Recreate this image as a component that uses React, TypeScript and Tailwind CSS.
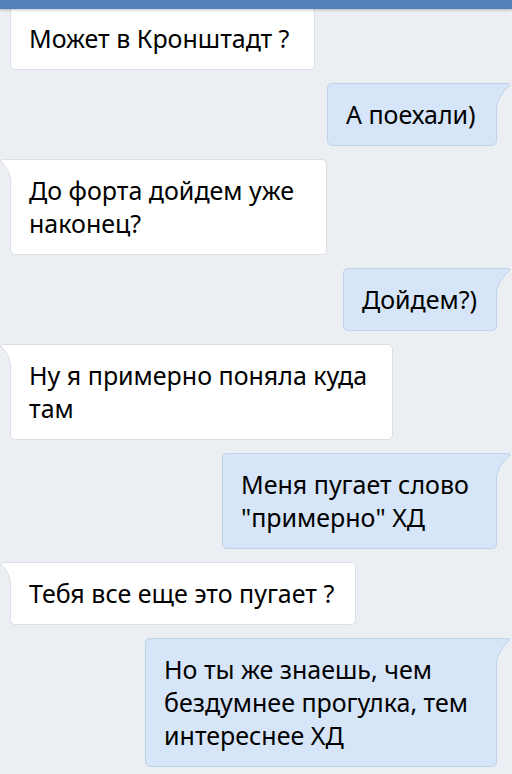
import React from 'react';

type Msg = {
  side: 'in' | 'out';
  lines: string[];
  width: string;
  tail?: boolean;
};

const messages: Msg[] = [
  { side: 'in', lines: ['Может в Кронштадт ?'], width: 'w-[305px]', tail: false },
  { side: 'out', lines: ['А поехали)'], width: 'w-[170px]' },
  { side: 'in', lines: ['До форта дойдем уже', 'наконец?'], width: 'w-[317px]' },
  { side: 'out', lines: ['Дойдем?)'], width: 'w-[154px]' },
  { side: 'in', lines: ['Ну я примерно поняла куда', 'там'], width: 'w-[383px]' },
  { side: 'out', lines: ['Меня пугает слово', '"примерно" ХД'], width: 'w-[275px]' },
  { side: 'in', lines: ['Тебя все еще это пугает ?'], width: 'w-[346px]' },
  { side: 'out', lines: ['Но ты же знаешь, чем', 'бездумнее прогулка, тем', 'интереснее ХД'], width: 'w-[352px]' },
];

function TailIn() {
  return (
    <svg className="absolute -left-[11px] -top-px" width="12" height="24" viewBox="0 0 12 24">
      <path d="M12 0 H3 Q0 0 1.5 2.5 Q10 10 11 24 H12 Z" fill="#ffffff" />
      <path d="M12 0.5 H3 Q0 0.5 1.5 3 Q10 10.5 11 24" fill="none" stroke="#dbdfe5" strokeWidth="1" />
    </svg>
  );
}

function TailOut() {
  return (
    <svg className="absolute -right-[15px] -top-px" width="16" height="26" viewBox="0 0 16 26">
      <path d="M0 0 H13 Q16 0 14.5 2.5 Q3 12 1 26 H0 Z" fill="#d6e5f7" />
      <path d="M0 0.5 H13 Q15.5 0.5 14 3 Q3 12.5 1 26" fill="none" stroke="#bfd2e8" strokeWidth="1" />
    </svg>
  );
}

function Bubble({ msg }: { msg: Msg }) {
  const isOut = msg.side === 'out';
  const showTail = msg.tail !== false;
  return (
    <div className={`flex ${isOut ? 'justify-end pr-[15px]' : 'justify-start pl-[10px]'}`}>
      <div
        className={`relative ${msg.width} border py-[14px] pl-[18px] pr-[16px] text-[25px] leading-[33px] text-black ${
          isOut
            ? 'rounded-[5px] rounded-tr-none border-[#bfd2e8] bg-[#d6e5f7]'
            : 'rounded-[5px] rounded-tl-none border-[#dbdfe5] bg-white'
        }`}
      >
        {showTail && (isOut ? <TailOut /> : <TailIn />)}
        {msg.lines.map((l, i) => (
          <div key={i} className="whitespace-nowrap">{l}</div>
        ))}
      </div>
    </div>
  );
}

export default function App() {
  return (
    <div className="h-[774px] w-[512px] overflow-hidden bg-[#ebeef2] font-['Noto_Sans',sans-serif]">
      <div className="relative z-10 h-[9px] bg-[#5181b8] shadow-[0_1px_3px_rgba(0,0,0,0.25)]" />
      <div className="-mt-[2px] flex flex-col gap-[13px]">
        {messages.map((m, i) => (
          <Bubble key={i} msg={m} />
        ))}
      </div>
    </div>
  );
}
